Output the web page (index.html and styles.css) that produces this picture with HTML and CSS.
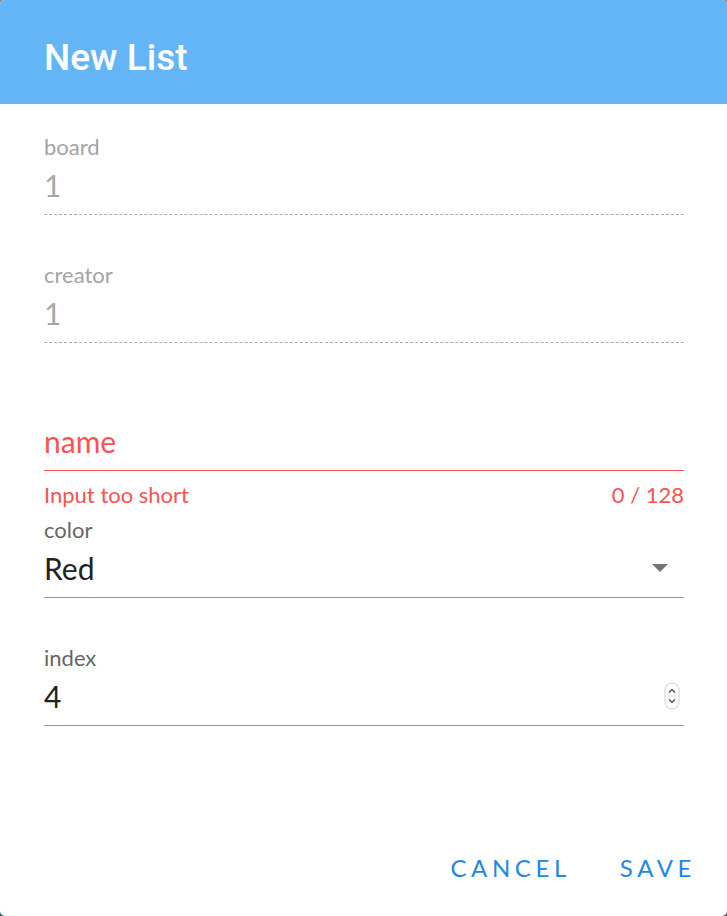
FILE: index.html
```html
<!DOCTYPE html>
<html lang="en">
<head>
<meta charset="utf-8">
<title>New List</title>
<link rel="stylesheet" href="styles.css">
</head>
<body>
<div class="dialog">
  <header class="dialog-header">
    <h1 class="dialog-title">New List</h1>
  </header>
  <form class="dialog-body">
    <div class="field field-disabled">
      <div class="field-label">board</div>
      <div class="field-control"><span class="field-value">1</span></div>
    </div>
    <div class="field field-disabled">
      <div class="field-label">creator</div>
      <div class="field-control"><span class="field-value">1</span></div>
    </div>
    <div class="field field-error">
      <div class="field-label"></div>
      <div class="field-control"><span class="field-value">name</span></div>
    </div>
    <div class="field-hint"><span>Input too short</span><span>0 / 128</span></div>
    <div class="field field-select">
      <div class="field-label">color</div>
      <div class="field-control">
        <span class="field-value">Red</span>
        <svg class="select-arrow" width="16" height="8" viewBox="0 0 16 8"><path d="M0 0h16L8 8z" fill="#757575"/></svg>
      </div>
    </div>
    <div class="field field-number">
      <div class="field-label">index</div>
      <div class="field-control">
        <span class="field-value">4</span>
        <svg class="spinner" width="17" height="29" viewBox="0 0 17 29">
          <rect x="1" y="1" width="14" height="26" rx="7" fill="#fff" stroke="#cfcfcf"/>
          <path d="M5.3 10.2L8 7.5l2.7 2.7" fill="none" stroke="#555" stroke-width="1.4" stroke-linecap="round" stroke-linejoin="round"/>
          <path d="M5.3 17.8L8 20.5l2.7-2.7" fill="none" stroke="#555" stroke-width="1.4" stroke-linecap="round" stroke-linejoin="round"/>
        </svg>
      </div>
    </div>
  </form>
  <footer class="dialog-actions">
    <button type="button" class="btn">CANCEL</button>
    <button type="button" class="btn">SAVE</button>
  </footer>
</div>
</body>
</html>
```
FILE: styles.css
```css
* { box-sizing: border-box; }
html, body { margin: 0; padding: 0; }
body {
  width: 727px;
  height: 916px;
  background: linear-gradient(#8c8c8c, #3c5874);
  font-family: Lato, "Open Sans", sans-serif;
}
.dialog {
  width: 727px;
  height: 916px;
  background: #fff;
  border-radius: 5px;
  overflow: hidden;
  display: flex;
  flex-direction: column;
}
.dialog-header {
  background: #64b5f6;
  height: 104px;
  padding: 12px 44px 0;
}
.dialog-title {
  margin: 0;
  font-family: Roboto, sans-serif;
  font-weight: 500;
  font-size: 37px;
  line-height: 92px;
  color: #fff;
}
.dialog-body {
  padding: 31px 43px 0 44px;
  display: flex;
  flex-direction: column;
}
.field + .field { margin-top: 48px; }
.field-label {
  font-size: 22px;
  line-height: 24px;
  height: 24px;
  color: #666;
}
.field-control {
  margin-top: 8px;
  height: 48px;
  padding-bottom: 11px;
  border-bottom: 1px solid #9a9a9a;
  display: flex;
  align-items: center;
  justify-content: space-between;
}
.field-value {
  font-size: 30px;
  line-height: 36px;
  color: #222;
}
.field-disabled .field-label { color: #a3a3a3; }
.field-disabled .field-value { color: #a8a8a8; }
.field-disabled .field-control { border-bottom: 1px dashed #b0b0b0; }
.field-error .field-value { color: #fb5151; }
.field-error .field-control { border-bottom-color: #fb5151; }
.field-hint {
  margin-top: 12px;
  display: flex;
  justify-content: space-between;
  font-size: 22px;
  line-height: 24px;
  color: #fb5151;
}
.field-hint + .field { margin-top: 11px; }
.select-arrow { margin-right: 16px; }
.spinner { margin-right: 3px; }
.dialog-actions {
  margin-top: auto;
  display: flex;
  justify-content: flex-end;
  gap: 33px;
  padding: 0 23px 30px 0;
}
.btn {
  border: 0;
  background: none;
  padding: 0 8px;
  font-family: Lato, sans-serif;
  font-size: 24px;
  line-height: 36px;
  letter-spacing: 4.6px;
  color: #1e88e5;
}
```
